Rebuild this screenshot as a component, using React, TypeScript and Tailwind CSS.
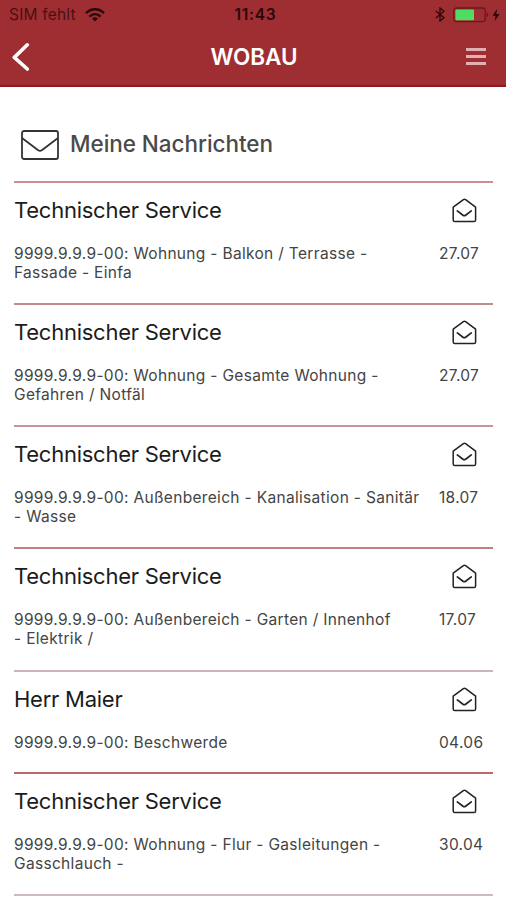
const messages = [
  { id: 1, sender: "Technischer Service", lines: ["9999.9.9.9-00: Wohnung - Balkon / Terrasse -", "Fassade - Einfa"], date: "27.07", size: "h-[122px]", line: "border-[#c98f92]" },
  { id: 2, sender: "Technischer Service", lines: ["9999.9.9.9-00: Wohnung - Gesamte Wohnung -", "Gefahren / Notfäl"], date: "27.07", size: "h-[122px]", line: "border-[#c38a8f]" },
  { id: 3, sender: "Technischer Service", lines: ["9999.9.9.9-00: Außenbereich - Kanalisation - Sanitär", "- Wasse"], date: "18.07", size: "h-[122px]", line: "border-[#c9959a]" },
  { id: 4, sender: "Technischer Service", lines: ["9999.9.9.9-00: Außenbereich - Garten / Innenhof", "- Elektrik /"], date: "17.07", size: "h-[123px]", line: "border-[#bf7f84]" },
  { id: 5, sender: "Herr Maier", lines: ["9999.9.9.9-00: Beschwerde"], date: "04.06", size: "h-[102px]", line: "border-[#cdb4b8]" },
  { id: 6, sender: "Technischer Service", lines: ["9999.9.9.9-00: Wohnung - Flur - Gasleitungen -", "Gasschlauch -"], date: "30.04", size: "h-[122px]", line: "border-[#b9686e]" },
];

const OpenMailIcon = () => (
  <svg className="h-[25px] w-[25px]" viewBox="0 0 25 25" fill="none" stroke="#222" strokeWidth="1.5" strokeLinejoin="round" strokeLinecap="round">
    <path d="M1.2 9.2 11.4 1.7Q12.5 1 13.6 1.7L23.6 9.2V22Q23.6 23.6 22 23.6H2.8Q1.2 23.6 1.2 22Z" />
    <path d="M5.3 12.9 11 17.2Q12.3 18 13.6 17.2L19.3 12.9" strokeWidth="1.7" />
  </svg>
);

const StatusBar = () => (
  <div className="grid h-[29px] grid-cols-3 items-center pl-[9px] pr-[6px] text-[#2a0709]">
    <div className="flex items-center gap-[9px]">
      <span className="text-[15.5px] tracking-[0.2px] whitespace-nowrap text-[#4a1013]">SIM fehlt</span>
      <svg className="h-[14px] w-[20px]" viewBox="0 0 20 14" fill="none" stroke="currentColor" strokeWidth="2.4">
        <path d="M1 5.2C6-.1 14-.1 19 5.2" />
        <path d="M4.4 8.6C7.6 5.3 12.4 5.3 15.6 8.6" />
        <path d="M7 10.6Q10 8 13 10.6L10 13.6Z" fill="currentColor" stroke="none" />
      </svg>
    </div>
    <span className="pl-[2px] text-center text-[15.5px] font-semibold tracking-[0.7px]">11:43</span>
    <div className="flex items-center justify-end">
      <svg className="mr-[8px] h-[15px] w-[10px]" viewBox="0 0 10 15" fill="none" stroke="currentColor" strokeWidth="1.3">
        <path d="M.8 4.1 9 10.8 5 14V1L9 4.2.8 10.9" />
      </svg>
      <svg className="h-[16px] w-[37px]" viewBox="0 0 37 16">
        <rect x=".8" y="1" width="31.4" height="13.6" rx="2.5" fill="none" stroke="#6d171c" strokeWidth="1.3" />
        <rect x="2.4" y="2.6" width="18.6" height="10.6" rx="1" fill="#4fdc62" />
        <path d="M33.6 5Q37 7.8 33.6 10.6Z" fill="#6d171c" />
      </svg>
      <svg className="ml-[2px] h-[12px] w-[8px]" viewBox="0 0 8 12" fill="currentColor">
        <path d="M5 0 .5 6.8H3.6L2.6 12 7.6 4.9H4.4Z" />
      </svg>
    </div>
  </div>
);

const Header = () => (
  <header className="h-[87px] border-b-2 border-[#8e1a20] bg-[#9f2e33]">
    <StatusBar />
    <div className="grid h-[56px] grid-cols-[1fr_auto_1fr] items-center pl-[12px] pr-[20px]">
      <svg className="h-[30px] w-[18px]" viewBox="0 0 18 30" fill="none" stroke="white" strokeWidth="3.6" strokeLinecap="round" strokeLinejoin="round">
        <path d="M15.3 2.8 2.3 15.4 15.3 27" />
      </svg>
      <h1 className="pl-[10px] text-[22.5px] font-semibold text-white">WOBAU</h1>
      <div className="flex w-[20px] flex-col gap-[4px] justify-self-end pb-[2px]">
        <span className="h-[3px] bg-[#e0b0b3]" />
        <span className="h-[3px] bg-[#e0b0b3]" />
        <span className="h-[3px] bg-[#e0b0b3]" />
      </div>
    </div>
  </header>
);

const App = () => {
  return (
    <div className="h-[900px] overflow-hidden bg-white font-['Inter','Liberation_Sans',sans-serif]">
      <Header />

      {/* Page title */}
      <div className="flex h-[94px] items-center gap-[11px] pl-[21px] pt-[20px]">
        <svg className="mt-[2px] h-[30px] w-[38px]" viewBox="0 0 38 30" fill="none" stroke="#333" strokeWidth="1.8" strokeLinejoin="round">
          <rect x="1" y="1" width="36" height="28" rx="2" />
          <path d="M1 8 17.2 20.3Q19 21.4 20.8 20.3L37 8" />
        </svg>
        <h2 className="text-[22.5px] font-medium tracking-[-0.05px] text-[#4a4a4a]">Meine Nachrichten</h2>
      </div>

      {/* Message list */}
      <ul className="ml-[14px] mr-[13px] border-b-2 border-[#d0babd]">
        {messages.map(message => (
          <li key={message.id} className={`${message.size} border-t-2 ${message.line}`}>
            <div className="flex h-[54px] items-center justify-between pr-[16px]">
              <h3 className="text-[22px] tracking-[-0.25px] text-[#1c1c1c]">{message.sender}</h3>
              <OpenMailIcon />
            </div>
            <div className="flex justify-between pt-[7px] text-[15.5px] leading-[19px] tracking-[0.32px] text-[#444]">
              <div className="whitespace-nowrap">
                {message.lines.map(line => (
                  <p key={line}>{line}</p>
                ))}
              </div>
              <span className="w-[54px]">{message.date}</span>
            </div>
          </li>
        ))}
      </ul>
    </div>
  );
};

export default App;
